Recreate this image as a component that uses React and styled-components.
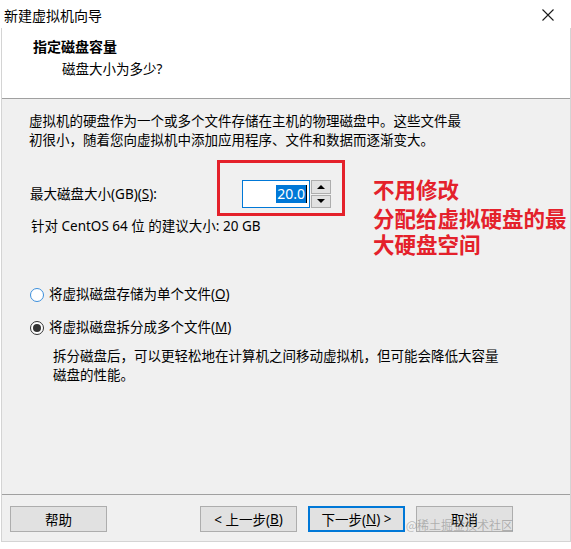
import styled, { createGlobalStyle } from "styled-components"

const GlobalStyle = createGlobalStyle`
  html, body {
    margin: 0;
    padding: 0;
    background: #ffffff;
  }
  body {
    font-family: "Noto Sans", "Noto Sans CJK SC", sans-serif;
    font-size: 13.5px;
    color: #000;
  }
`

export default function App() {
  return (
    <Page>
      <GlobalStyle />
      <TitleBar>
        <span>新建虚拟机向导</span>
        <CloseIcon viewBox="0 0 12 12">
          <path d="M0.5 0.5 L11.5 11.5 M11.5 0.5 L0.5 11.5" />
        </CloseIcon>
      </TitleBar>
      <Frame>
        <Header>
          <h1>指定磁盘容量</h1>
          <p>磁盘大小为多少?</p>
        </Header>

        <Body>
          <Paragraph>
            虚拟机的硬盘作为一个或多个文件存储在主机的物理磁盘中。这些文件最<br />
            初很小，随着您向虚拟机中添加应用程序、文件和数据而逐渐变大。
          </Paragraph>

          <SizeRow>
            <SizeLabel>最大磁盘大小(GB)(<u>S</u>):</SizeLabel>
            <Spinner>
              <SpinInput>
                <Selected>20.0</Selected>
                <Caret />
              </SpinInput>
              <SpinButtons>
                <SpinButton><Arrow dir="up" /></SpinButton>
                <SpinButton><Arrow dir="down" /></SpinButton>
              </SpinButtons>
            </Spinner>
            <RedBox />
            <Annotation>
              <div>不用修改</div>
              <div>分配给虚拟硬盘的最</div>
              <div>大硬盘空间</div>
            </Annotation>
          </SizeRow>

          <Hint>针对 CentOS 64 位 的建议大小: 20 GB</Hint>

          <RadioRow $first>
            <Radio />
            <span>将虚拟磁盘存储为单个文件(<u>O</u>)</span>
          </RadioRow>
          <RadioRow>
            <Radio $checked />
            <span>将虚拟磁盘拆分成多个文件(<u>M</u>)</span>
          </RadioRow>
          <Description>
            拆分磁盘后，可以更轻松地在计算机之间移动虚拟机，但可能会降低大容量<br />
            磁盘的性能。
          </Description>
        </Body>

        <Footer>
          <Button>帮助</Button>
          <NavButtons>
            <Button>&lt; 上一步(<u>B</u>)</Button>
            <Button $primary>下一步(<u>N</u>) &gt;</Button>
            <Button>取消</Button>
          </NavButtons>
          <Watermark>@稀土掘金技术社区</Watermark>
        </Footer>
      </Frame>
    </Page>
  )
}

const Page = styled.div`
  width: 571px;
  height: 549px;
  display: flex;
  flex-direction: column;
  overflow: hidden;
`
const TitleBar = styled.div`
  height: 26px;
  padding: 2px 17px 0 4px;
  display: flex;
  align-items: center;
  justify-content: space-between;
  font-family: "Noto Sans CJK SC", sans-serif;
  font-size: 14px;
`
const CloseIcon = styled.svg`
  width: 12px;
  height: 12px;
  fill: none;
  stroke: #1a1a1a;
  stroke-width: 1.1;
`
const Frame = styled.div`
  height: 513px;
  margin-left: 1px;
  width: 568px;
  border-left: 1px solid #d4d4d4;
  border-right: 1px solid #d4d4d4;
  border-bottom: 1px solid #d4d4d4;
  display: flex;
  flex-direction: column;
  background: #f0f0f0;
`
const Header = styled.div`
  height: 70px;
  background: #fff;
  border-bottom: 1px solid #a0a0a0;
  padding-left: 31px;
  h1 {
    margin: 0;
    padding-top: 8px;
    font-size: 14px;
    font-weight: 700;
    line-height: 20px;
    font-family: "Noto Sans CJK SC", sans-serif;
  }
  p {
    margin: 3px 0 0 29px;
    line-height: 20px;
    font-size: 13.5px;
  }
`
const Body = styled.div`
  flex: 1;
  padding: 13px 0 0 28px;
  line-height: 19px;
`
const Paragraph = styled.p`
  margin: 0;
  margin-left: -1px;
`
const SizeRow = styled.div`
  position: relative;
  margin-top: 30px;
  display: flex;
  align-items: center;
  height: 28px;
`
const SizeLabel = styled.span`
  width: 212px;
  padding-top: 1px;
`
const Spinner = styled.div`
  display: flex;
  height: 28px;
`
const SpinInput = styled.div`
  width: 64px;
  height: 26px;
  background: #fff;
  border: 1px solid #0078d7;
  display: flex;
  align-items: center;
  justify-content: flex-end;
  padding-right: 2px;
`
const Selected = styled.span`
  background: #0078d7;
  color: #fff;
  font-size: 14px;
  line-height: 18px;
  padding: 0 1px;
`
const Caret = styled.span`
  width: 1px;
  height: 18px;
  background: #000;
`
const SpinButtons = styled.div`
  display: flex;
  flex-direction: column;
  gap: 1px;
  margin-left: 1px;
`
const SpinButton = styled.div`
  width: 18px;
  height: 12px;
  border: 1px solid #adadad;
  background: #e1e1e1;
  display: flex;
  align-items: center;
  justify-content: center;
`
const Arrow = styled.span`
  width: 0;
  height: 0;
  border-left: 4px solid transparent;
  border-right: 4px solid transparent;
  ${(p) => (p.dir === "up" ? "border-bottom: 4px solid #000;" : "border-top: 4px solid #000;")}
`
const RedBox = styled.div`
  position: absolute;
  left: 187px;
  top: -20px;
  width: 122px;
  height: 50px;
  border: 3px solid #e4212b;
`
const Annotation = styled.div`
  position: absolute;
  left: 343px;
  top: -4px;
  color: #e4212b;
  font-family: "Noto Sans CJK SC", sans-serif;
  font-weight: 700;
  font-size: 21.5px;
  line-height: 26px;
  white-space: nowrap;
  display: flex;
  flex-direction: column;
  div:first-child {
    margin-bottom: 3px;
  }
`
const Hint = styled.div`
  margin-top: 9px;
  margin-left: 1px;
`
const RadioRow = styled.div`
  display: flex;
  align-items: center;
  gap: 5px;
  margin-top: ${(p) => (p.$first ? "49px" : "14px")};
  height: 19px;
`
const Radio = styled.span`
  width: 12px;
  height: 12px;
  border-radius: 50%;
  background: #fff;
  border: 1px solid ${(p) => (p.$checked ? "#333" : "#3b8fdc")};
  display: flex;
  align-items: center;
  justify-content: center;
  &::after {
    content: "";
    width: 8px;
    height: 8px;
    border-radius: 50%;
    background: ${(p) => (p.$checked ? "#333" : "transparent")};
  }
`
const Description = styled.p`
  margin: 10px 0 0 23px;
`
const Footer = styled.div`
  position: relative;
  height: 47px;
  border-top: 1px solid #a0a0a0;
  display: flex;
  align-items: flex-start;
  justify-content: space-between;
  padding: 11px 57px 0 8px;
  box-sizing: border-box;
`
const NavButtons = styled.div`
  display: flex;
  gap: 11px;
`
const Button = styled.button`
  width: 97px;
  height: 26px;
  margin: 0;
  padding: 0;
  background: #e1e1e1;
  border: ${(p) => (p.$primary ? "2px solid #0078d7" : "1px solid #adadad")};
  font-family: "Noto Sans", "Noto Sans CJK SC", sans-serif;
  font-size: 13.5px;
  color: #000;
  display: flex;
  align-items: center;
  justify-content: center;
`
const Watermark = styled.div`
  position: absolute;
  right: 57px;
  bottom: 8px;
  font-family: "Noto Sans CJK SC", sans-serif;
  font-size: 12px;
  color: rgba(110, 110, 110, 0.45);
`
